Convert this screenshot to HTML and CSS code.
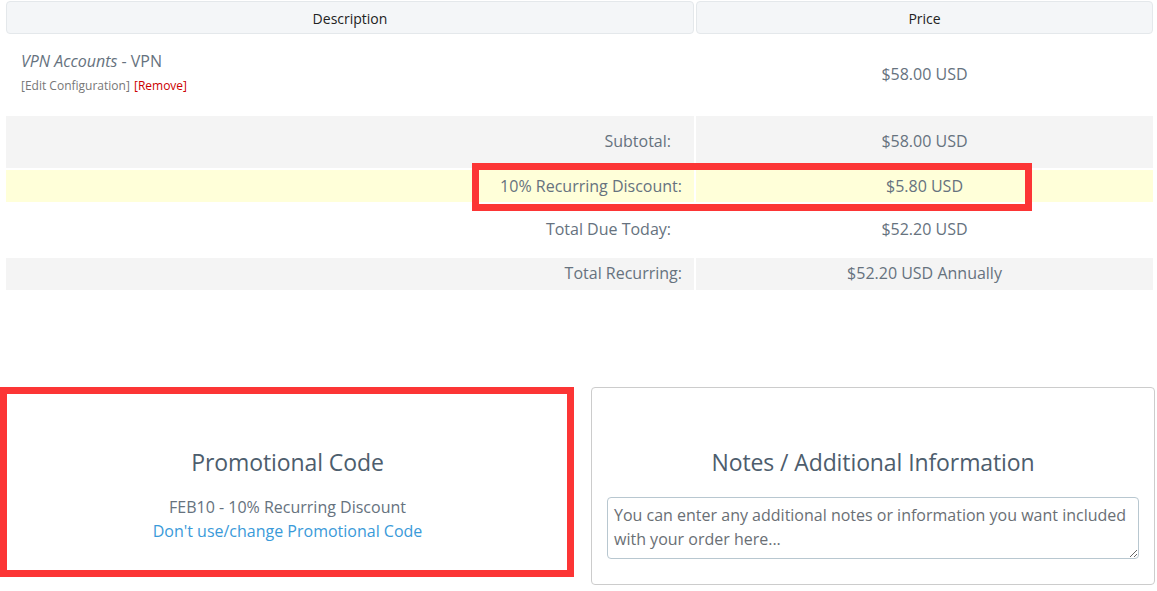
FILE: index.html
```html
<!DOCTYPE html>
<html>
<head>
<meta charset="utf-8" />
<title>Review &amp; Checkout</title>
<link rel="stylesheet" href="styles.css">
</head>
<body>
<div class="cart">

    <div class="summary">
        <div class="row head">
            <div class="cell">Description</div>
            <div class="cell">Price</div>
        </div>
        <div class="row item">
            <div class="cell desc">
                <div class="prod"><em>VPN Accounts</em> - VPN</div>
                <div class="actions">
                    <a href="#" class="edit">[Edit Configuration]</a>
                    <a href="#" class="remove">[Remove]</a>
                </div>
            </div>
            <div class="cell amt">$58.00 USD</div>
        </div>
        <div class="row sub grey tall">
            <div class="cell label">Subtotal:</div>
            <div class="cell amt">$58.00 USD</div>
        </div>
        <div class="row sub promo">
            <div class="cell label wide">10% Recurring Discount:</div>
            <div class="cell amt">$5.80 USD</div>
        </div>
        <div class="row sub tall">
            <div class="cell label">Total Due Today:</div>
            <div class="cell amt">$52.20 USD</div>
        </div>
        <div class="row sub grey">
            <div class="cell label wide">Total Recurring:</div>
            <div class="cell amt">$52.20 USD Annually</div>
        </div>
    </div>

    <div class="panels">
        <div class="panel promo-panel">
            <h2>Promotional Code</h2>
            <p>FEB10 - 10% Recurring Discount<br><a href="#">Don't use/change Promotional Code</a></p>
        </div>
        <div class="panel notes-panel">
            <h2>Notes / Additional Information</h2>
            <textarea placeholder="You can enter any additional notes or information you want included with your order here..."></textarea>
        </div>
    </div>

    <!-- highlight marks -->
    <div class="mark mark-discount"></div>
    <div class="mark mark-promo"></div>
</div>
</body>
</html>
```

FILE: styles.css
```css
*{box-sizing:border-box;}
body{margin:0;padding:0;background:#fff;font-family:"Open Sans","Noto Sans",sans-serif;color:#66727e;}
.cart{position:relative;width:1157px;height:591px;padding:1px 4px 0 6px;}

.summary{display:flex;flex-direction:column;gap:2px;}
.row{display:grid;grid-template-columns:688px 457px;column-gap:2px;}
.cell{display:flex;align-items:center;}

.head .cell{height:33px;padding-top:1px;justify-content:center;background:#f4f6f8;border:1px solid #e4e8eb;border-radius:4px;font-size:14px;color:#222;}

.item .cell{height:78px;}
.item .desc{flex-direction:column;align-items:flex-start;justify-content:flex-start;padding:14px 0 0 15px;}
.prod{font-size:16px;line-height:22px;}
.actions{margin-top:5px;font-size:12px;line-height:18px;}
.actions a{text-decoration:none;margin-right:1px;}
.actions .edit{color:#777;}
.actions .remove{color:#cc0000;}
.item .amt{padding-bottom:2px;}

.amt{justify-content:center;font-size:16px;}
.sub .cell{height:32px;}
.sub.tall .cell{height:52px;}
.label{justify-content:flex-end;padding-right:23px;font-size:16px;}
.label.wide{padding-right:12px;}
.grey .cell{background:#f4f4f4;}
.promo .cell{background:#ffffd9;}
.sub.tall .cell{padding-bottom:2px;}
.row.sub:last-child .cell{padding-bottom:3px;}

.panels{display:grid;grid-template-columns:571px 564px;column-gap:18px;align-items:start;margin:97px 0 0 -4px;}
.panel{border:1px solid #ccc;border-radius:4px;padding:59px 15px 25px;text-align:center;}
.panel h2{margin:0;font-size:23px;font-weight:400;line-height:30px;color:#4d5d6d;letter-spacing:-0.1px;}
.panel p{margin:18px 0 0;font-size:16px;line-height:24px;}
.panel p a{color:#3a9ad9;text-decoration:none;}
.promo-panel{padding-bottom:30px;}
.notes-panel textarea{display:block;width:100%;height:62px;margin-top:20px;padding:5px 6px;border:1px solid #b8c7d0;border-radius:4px;font-family:"Open Sans","Noto Sans",sans-serif;font-size:16px;line-height:24px;color:#555;resize:vertical;}
.notes-panel textarea::placeholder{color:#6a6f75;}

.mark{position:absolute;border:7px solid #fc3535;pointer-events:none;}
.mark-discount{left:472px;top:163px;width:560px;height:48px;}
.mark-promo{left:0;top:387px;width:574px;height:190px;}
```
